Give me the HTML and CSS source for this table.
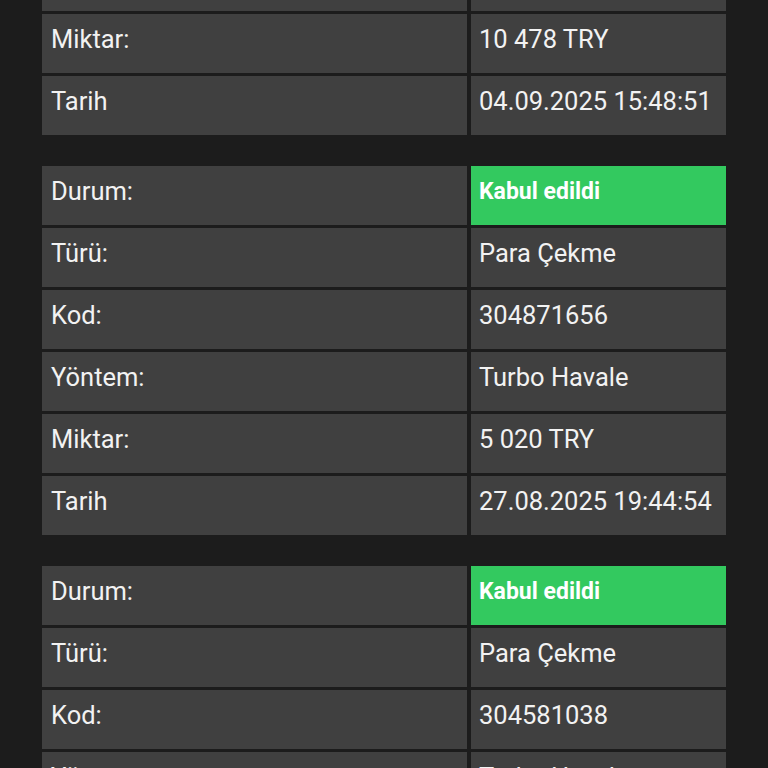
FILE: index.html
```html
<!DOCTYPE html>
<html lang="tr">
<head>
<meta charset="utf-8">
<title>İşlemler</title>
<link rel="stylesheet" href="styles.css">
</head>
<body>
<main class="list">
  <section class="card">
    <div class="k">Durum:</div><div class="v ok">Kabul edildi</div>
    <div class="k">Türü:</div><div class="v">Para Çekme</div>
    <div class="k">Kod:</div><div class="v">305112874</div>
    <div class="k">Yöntem:</div><div class="v">Turbo Havale</div>
    <div class="k">Miktar:</div><div class="v">10 478 TRY</div>
    <div class="k">Tarih</div><div class="v">04.09.2025 15:48:51</div>
  </section>
  <section class="card">
    <div class="k">Durum:</div><div class="v ok">Kabul edildi</div>
    <div class="k">Türü:</div><div class="v">Para Çekme</div>
    <div class="k">Kod:</div><div class="v">304871656</div>
    <div class="k">Yöntem:</div><div class="v">Turbo Havale</div>
    <div class="k">Miktar:</div><div class="v">5 020 TRY</div>
    <div class="k">Tarih</div><div class="v">27.08.2025 19:44:54</div>
  </section>
  <section class="card">
    <div class="k">Durum:</div><div class="v ok">Kabul edildi</div>
    <div class="k">Türü:</div><div class="v">Para Çekme</div>
    <div class="k">Kod:</div><div class="v">304581038</div>
    <div class="k">Yöntem:</div><div class="v">Turbo Havale</div>
    <div class="k">Miktar:</div><div class="v">4 850 TRY</div>
    <div class="k">Tarih</div><div class="v">25.08.2025 12:10:33</div>
  </section>
</main>
</body>
</html>
```
FILE: styles.css
```css
html, body {
  margin: 0;
  padding: 0;
  background: #1c1c1c;
  overflow: hidden;
}
body {
  font-family: Roboto, "Noto Sans", sans-serif;
  color: #f2f2f2;
}
.list {
  margin-top: -234px;
  padding-left: 42px;
  display: flex;
  flex-direction: column;
  gap: 31px;
}
.card {
  display: grid;
  grid-template-columns: 425px 255px;
  grid-auto-rows: 59px;
  gap: 3px 4px;
}
.k, .v {
  background: #404040;
  padding: 11px 0 0 9px;
  font-size: 25.5px;
  line-height: 29px;
  box-sizing: border-box;
}
.v {
  padding-left: 8px;
}
.v.ok {
  background: #33c95f;
  color: #fff;
  font-weight: bold;
  font-size: 23px;
  padding-top: 11px;
}
```
